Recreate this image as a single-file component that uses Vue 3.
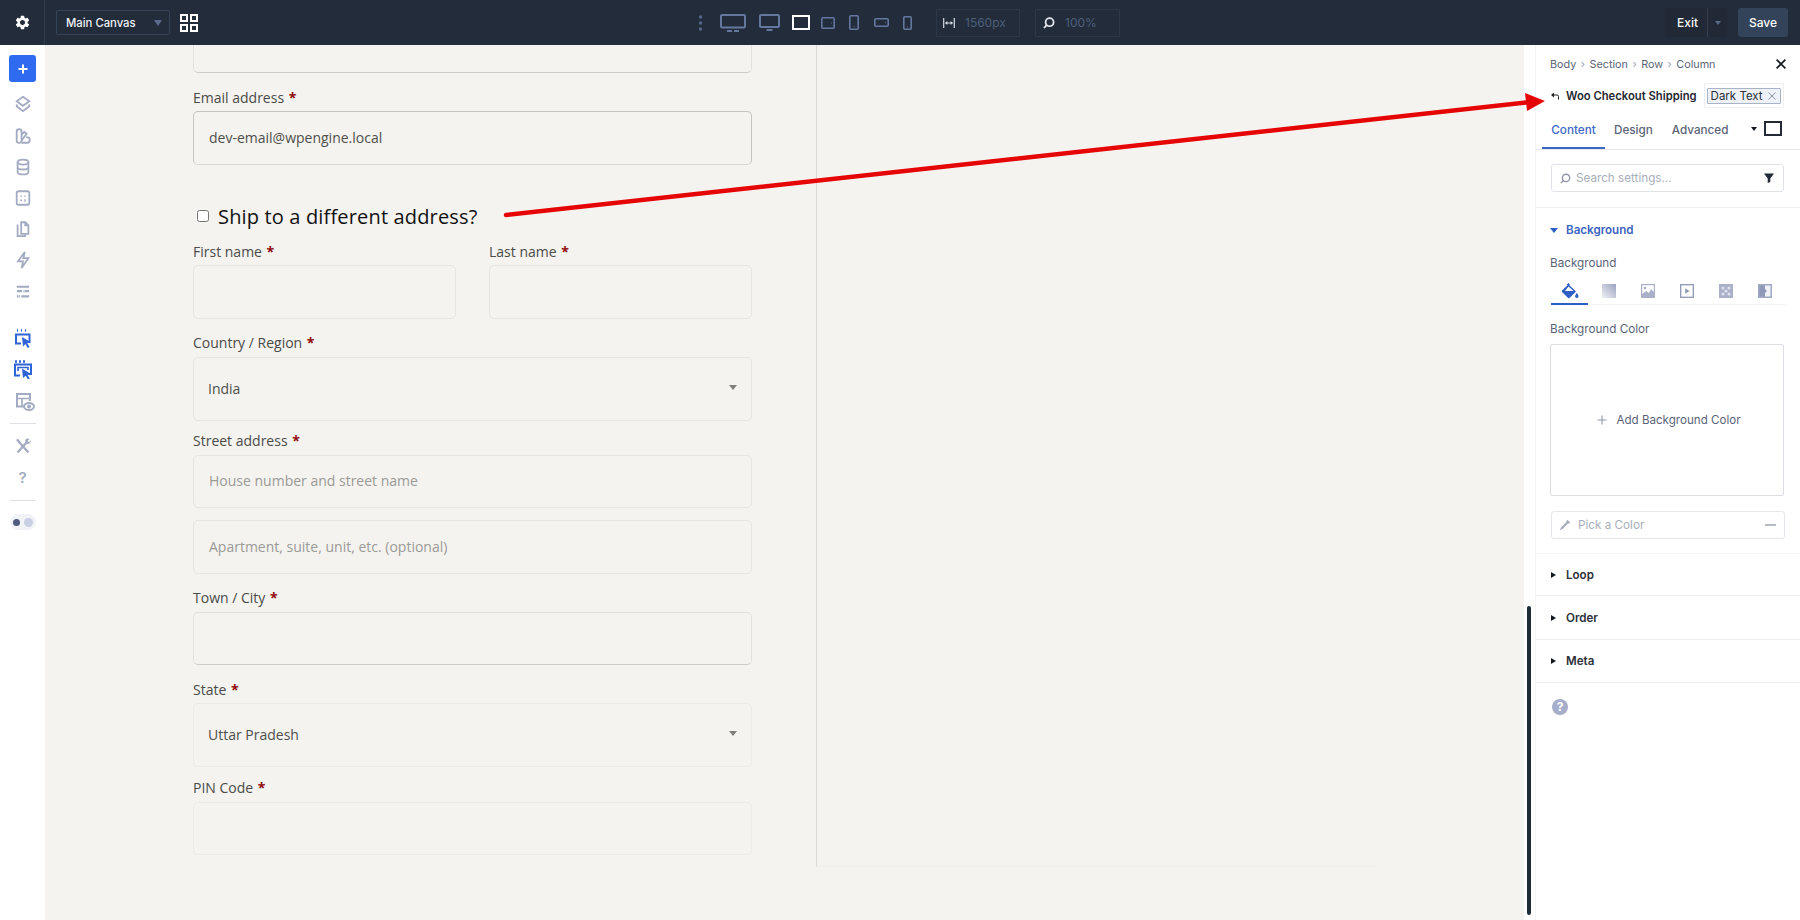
<template>
  <div class="app">
    <header class="topbar">
      <div class="gearcell">
        <svg class="gear" viewBox="0 0 24 24"><path fill="#fff" d="M19.14 12.94c.04-.3.06-.61.06-.94 0-.32-.02-.64-.07-.94l2.03-1.58a.49.49 0 0 0 .12-.61l-1.92-3.32a.488.488 0 0 0-.59-.22l-2.39.96c-.5-.38-1.03-.7-1.62-.94l-.36-2.54a.484.484 0 0 0-.48-.41h-3.84c-.24 0-.43.17-.47.41l-.36 2.54c-.59.24-1.13.57-1.62.94l-2.39-.96c-.22-.08-.47 0-.59.22L2.74 8.87c-.12.21-.08.47.12.61l2.03 1.58c-.05.3-.09.63-.09.94s.02.64.07.94l-2.03 1.58a.49.49 0 0 0-.12.61l1.92 3.32c.12.22.37.29.59.22l2.39-.96c.5.38 1.03.7 1.62.94l.36 2.54c.05.24.24.41.48.41h3.84c.24 0 .44-.17.47-.41l.36-2.54c.59-.24 1.13-.56 1.62-.94l2.39.96c.22.08.47 0 .59-.22l1.92-3.32c.12-.22.07-.47-.12-.61l-2.01-1.58zM12 15.6c-1.98 0-3.6-1.62-3.6-3.6s1.62-3.6 3.6-3.6 3.6 1.62 3.6 3.6-1.62 3.6-3.6 3.6z"/></svg>
      </div>
      <div class="canvas-select">
        <span>Main Canvas</span>
        <i class="tri tri-top"></i>
      </div>
      <svg class="gridicon" viewBox="0 0 18 18" fill="none" stroke="#fff" stroke-width="2"><rect x="1" y="1" width="6" height="6"/><rect x="11" y="1" width="6" height="6"/><rect x="1" y="11" width="6" height="6"/><rect x="11" y="11" width="6" height="6"/></svg>

      <div class="devices">
        <svg class="d-dots" viewBox="0 0 5 16" fill="#56688a"><circle cx="2.5" cy="2" r="1.7"/><circle cx="2.5" cy="8" r="1.7"/><circle cx="2.5" cy="14" r="1.7"/></svg>
        <svg class="d-mon1" viewBox="0 0 26 18" fill="none" stroke="#64779f" stroke-width="2"><rect x="1" y="1" width="24" height="12.5" rx="1"/><path d="M7 17h5M14 17h5"/></svg>
        <svg class="d-mon2" viewBox="0 0 21 17" fill="none" stroke="#64779f" stroke-width="2"><rect x="1" y="1" width="19" height="12" rx="1"/><path d="M7.5 16h6"/></svg>
        <svg class="d-base" viewBox="0 0 18 15" fill="none" stroke="#fff" stroke-width="2"><rect x="1" y="1" width="16" height="13"/></svg>
        <svg class="d-tl" viewBox="0 0 14 12" fill="none" stroke="#64779f" stroke-width="1.6"><rect x=".8" y=".8" width="12.4" height="10.4" rx="1"/><path d="M10.5 6h.5"/></svg>
        <svg class="d-tp" viewBox="0 0 10 15" fill="none" stroke="#64779f" stroke-width="1.6"><rect x=".8" y=".8" width="8.4" height="13.4" rx="1"/><path d="M4.7 11.5h.6"/></svg>
        <svg class="d-ml" viewBox="0 0 15 9" fill="none" stroke="#64779f" stroke-width="1.6"><rect x=".8" y=".8" width="13.4" height="7.4" rx="1"/><path d="M11 4.5h.6"/></svg>
        <svg class="d-mp" viewBox="0 0 9 14" fill="none" stroke="#64779f" stroke-width="1.6"><rect x=".8" y=".8" width="7.4" height="12.4" rx="1"/><path d="M4.2 11h.6"/></svg>
      </div>

      <div class="metric metric-w">
        <svg class="m-ic1" viewBox="0 0 12 12" fill="none" stroke="#d5dae4" stroke-width="1.2"><path d="M.7 1v10M11.3 1v10M2.5 6h7"/><path fill="#d5dae4" stroke="none" d="M2 6l2.4-2v4zM10 6L7.6 4v4z"/></svg>
        <span>1560px</span>
      </div>
      <div class="metric metric-z">
        <svg class="m-ic2" viewBox="0 0 12 12" fill="none" stroke="#e4e7ee" stroke-width="1.8"><circle cx="6.6" cy="5.2" r="4"/><path d="M3.6 8.2L1 11"/></svg>
        <span>100%</span>
      </div>

      <div class="actions">
        <div class="exit">
          <span class="exit-label">Exit</span>
          <span class="exit-caret"><i class="tri tri-exit"></i></span>
        </div>
        <button class="save">Save</button>
      </div>
    </header>

    <div class="main">
      <nav class="sidebar">
        <div class="plus">
          <svg viewBox="0 0 10 10" fill="none" stroke="#fff" stroke-width="2"><path d="M5 .5v9M.5 5h9"/></svg>
        </div>
        <svg class="si mt-13" viewBox="0 0 18 20"><path d="M9 2l7 5-7 5-7-5z"/><path d="M2.2 10.5L2 12.5l7 5.5 7-5.5-.2-2"/></svg>
        <svg class="si mt-14" viewBox="0 0 18 20"><path d="M2 5a2.7 2.7 0 0 1 5.4 0v10a2.7 2.7 0 0 1-5.4 0z"/><path d="M7.5 8L10.5 5.5 13 7.5 7.5 15"/><path d="M7.5 17.5H14a2.4 2.4 0 0 0 2.4-2.4v-1.2A2.4 2.4 0 0 0 14 11.5h-1.5"/></svg>
        <svg class="si mt-13" viewBox="0 0 18 20"><ellipse cx="9" cy="4.5" rx="6" ry="2.8"/><path d="M3 4.5v11c0 1.6 2.7 2.8 6 2.8s6-1.2 6-2.8v-11M3 10c0 1.6 2.7 2.8 6 2.8s6-1.2 6-2.8"/></svg>
        <svg class="si mt-13" viewBox="0 0 18 20"><rect x="2" y="2.5" width="14" height="15" rx="2"/><path d="M6 8h2M10.5 8h1.5M6 12.5h2M10.5 12h1.5M10.5 13.5h1.5" stroke-width="1.4"/></svg>
        <svg class="si mt-13" viewBox="0 0 18 20"><path d="M7 2.5h4.5L15 6v9.5H7z"/><path d="M4 6H3v12h8.5v-2"/><path d="M11.5 2.5V6H15"/></svg>
        <svg class="si mt-13" viewBox="0 0 18 20"><path d="M11 1L3.5 11.5H9L7.5 19 15 8H9.5z"/></svg>
        <svg class="si si-lines mt-16" viewBox="0 0 18 16"><path d="M2 2h14M2 7h6M11 7h5M2 13h2M7 13h9" stroke-width="2.4"/><path d="M10 5.5v3M5 11.5v3" stroke-width="1"/></svg>

        <svg class="si si-blue mt-29" viewBox="0 0 20 20"><path d="M4 2.5h1M8 2.5h1M12 2.5h1" stroke-width="2.6"/><path d="M14.5 14H16.500V6.500H3v9h5"/><path fill="#2f63d6" stroke="none" d="M9 9l8.500 5-3.300 1 2.300 4-1.800 1-2.200-4-2.500 2.500z"/></svg>
        <svg class="si si-blue mt-11" viewBox="0 0 20 20"><path d="M2 2.500h2M6 2.500h2M10 2.500h2" stroke-width="2.6"/><path d="M15 15h3V5.500H2v11h5"/><path d="M5 12V8.500h10V11" stroke-width="1.600"/><path fill="#2f63d6" stroke="none" d="M9 9.500l9 5.500-3.500 1 2.300 3.600-1.800 1-2.200-3.800-2.800 2.200z"/></svg>
        <svg class="si mt-13 si-eye" viewBox="0 0 20 20"><path d="M10 14.500H2V2h13v7"/><path d="M2 6.500h13M7 6.500v8" stroke-width="1.700"/><ellipse cx="14" cy="14.500" rx="5" ry="3.500"/><circle cx="14" cy="14.500" r="1" fill="#a3abc2"/></svg>
        <div class="hr hr-1"></div>
        <svg class="si mt-13 si-tools" viewBox="0 0 18 18"><path d="M3.500 15.500L13 5" stroke-width="2.200"/><path d="M14.500 15.500L5 5" stroke-width="2.200"/><path d="M2 3l1.800-1.300 2.700 2.700-1.800 1.800z" fill="#a3abc2" stroke="none"/><path d="M11 4a3 3 0 0 1 4.500-2l-2 2 1.500 1.300 1.800-1.800a3 3 0 0 1-3.400 3.500z" fill="#a3abc2" stroke="none"/></svg>
        <span class="q">?</span>
        <div class="hr hr-2"></div>
        <div class="toggle">
          <i class="dot dark"></i><i class="dot pale"></i>
        </div>
      </nav>

      <main class="canvas">
        <div class="canvas-row">
          <form class="form" @submit.prevent>
            <div class="inp h28 notop line-md"></div>

            <label class="lab mt15">Email address <b>*</b></label>
            <div class="inp h54 mt3 line-strong"><span class="val">dev-email@wpengine.local</span></div>

            <div class="ship mt39">
              <input class="chk" type="checkbox" />
              <span>Ship to a different address?</span>
            </div>

            <div class="pair mt14">
              <div class="half">
                <label class="lab">First name <b>*</b></label>
                <div class="inp h54 mt3 line-soft"></div>
              </div>
              <div class="half half-b">
                <label class="lab">Last name <b>*</b></label>
                <div class="inp h54 mt3 line-soft"></div>
              </div>
            </div>

            <label class="lab mt14">Country / Region <b>*</b></label>
            <div class="inp h64 mt4 line-soft sel"><span class="val">India</span><i class="tri tri-sel"></i></div>

            <label class="lab mt10">Street address <b>*</b></label>
            <div class="inp h53 mt4 line-soft"><span class="ph">House number and street name</span></div>
            <div class="inp h54 mt12 line-soft"><span class="ph">Apartment, suite, unit, etc. (optional)</span></div>

            <label class="lab mt14">Town / City <b>*</b></label>
            <div class="inp h53 mt4 line-md"></div>

            <label class="lab mt15">State <b>*</b></label>
            <div class="inp h64 mt3 line-faint sel"><span class="val">Uttar Pradesh</span><i class="tri tri-sel"></i></div>

            <label class="lab mt11">PIN Code <b>*</b></label>
            <div class="inp h53 mt4 line-faint"></div>
          </form>
          <div class="sidecol"></div>
        </div>
      </main>

      <aside class="right">
        <div class="gutter"><div class="scrollbar"></div></div>
        <div class="panel">
          <div class="crumbs">
            <span>Body</span><em>›</em><span>Section</span><em>›</em><span>Row</span><em>›</em><span>Column</span>
            <svg class="close" viewBox="0 0 10 10" fill="none" stroke="#14181f" stroke-width="1.600"><path d="M.6.6l8.800 8.800M9.400.6L.6 9.400"/></svg>
          </div>

          <div class="titlerow">
            <svg class="back" viewBox="0 0 8 8" fill="none" stroke="#222" stroke-width="1"><path d="M2.500 3H6a1.500 1.500 0 0 1 1.500 1.500V7.500"/><path fill="#222" stroke="none" d="M0 3l3-2.500v5z"/></svg>
            <span class="title">Woo Checkout Shipping</span>
            <div class="classbox">
              <div class="chip"><span>Dark Text</span>
                <svg viewBox="0 0 8 8" fill="none" stroke="#8b93a5" stroke-width="1"><path d="M.5.5l7 7M7.500.5l-7 7"/></svg>
              </div>
            </div>
          </div>

          <div class="tabs">
            <div class="tab active">Content</div>
            <div class="tab">Design</div>
            <div class="tab">Advanced</div>
            <i class="tri tri-tab"></i>
            <span class="tabsquare"></span>
          </div>

          <div class="searchwrap">
            <div class="search">
              <svg class="s-ic" viewBox="0 0 12 12" fill="none" stroke="#8d95a6" stroke-width="1.500"><circle cx="6.600" cy="5.400" r="4"/><path d="M3.600 8.400L1 11"/></svg>
              <span>Search settings...</span>
              <svg class="s-filter" viewBox="0 0 10 10" fill="#232a36"><path d="M0 .5h10L6.300 5.500v3.500L3.700 10V5.500z"/></svg>
            </div>
          </div>

          <section class="bgsec">
            <div class="sec-head open"><i class="tri tri-blue"></i><span>Background</span></div>
            <div class="sublabel mt-bg">Background</div>
            <div class="bgtabs">
              <div class="bgtab on">
                <svg class="b1" viewBox="0 0 18 16" fill="#2f5ec4"><path d="M7.500 0L9 1.500 8.400 2.200 15 8.500 8.500 15a1 1 0 0 1-1.400 0L1 8.900a1 1 0 0 1 0-1.400L6.500 2.200 5.800 1.500zM4 8h8.500L7.500 3.500z"/><path d="M15.800 10s-1.700 2-1.700 3.300a1.700 1.700 0 0 0 3.400 0c0-1.300-1.700-3.300-1.700-3.300z"/></svg>
              </div>
              <div class="bgtab"><span class="gradbox"></span></div>
              <div class="bgtab">
                <svg class="b2" viewBox="0 0 14 14"><rect x=".6" y=".6" width="12.800" height="12.800" fill="#fff" stroke="#a9b0c8" stroke-width="1.200"/><circle cx="4" cy="4" r="1.300" fill="#a9b0c8"/><path d="M1 13V10l4-3 3 2 2-4 3 3v5z" fill="#a9b0c8"/></svg>
              </div>
              <div class="bgtab">
                <svg class="b2" viewBox="0 0 14 14"><rect x=".7" y=".7" width="12.600" height="12.600" fill="none" stroke="#8f97b4" stroke-width="1.300"/><path d="M5.200 4.300L9.500 7l-4.300 2.700z" fill="#8f97b4"/></svg>
              </div>
              <div class="bgtab">
                <svg class="b2" viewBox="0 0 14 14"><rect width="14" height="14" fill="#a9b0c8"/><circle cx="4" cy="4" r="1.600" fill="#dfe2ec"/><circle cx="10" cy="4" r="1.600" fill="#dfe2ec"/><circle cx="7" cy="7" r="1.600" fill="#dfe2ec"/><circle cx="4" cy="10" r="1.600" fill="#dfe2ec"/><circle cx="10" cy="10" r="1.600" fill="#dfe2ec"/></svg>
              </div>
              <div class="bgtab">
                <svg class="b2" viewBox="0 0 14 14"><rect width="14" height="14" fill="#a0a8c4"/><path d="M7 1.500h5.500v11H7z" fill="#f1f2f7"/><path d="M1.500 1.500H7V5L9 7 7 9v3.500H1.500z" fill="#9098b8"/></svg>
              </div>
            </div>

            <div class="sublabel mt-bc">Background Color</div>
            <div class="addbox">
              <svg viewBox="0 0 10 10" fill="none" stroke="#8f97a8" stroke-width="1.100"><path d="M5 .5v9M.5 5h9"/></svg>
              <span>Add Background Color</span>
            </div>
            <div class="pick">
              <svg class="p-ic" viewBox="0 0 12 12" fill="#a7adba"><path d="M8.500.8l2.700 2.700-1.300 1.300-.5-.5L3.500 10l-2.800 1.300L2 8.500l5.700-5.700-.5-.5z"/></svg>
              <span>Pick a Color</span>
              <i class="dash"></i>
            </div>
          </section>

          <div class="acc acc-first"><i class="tri tri-acc"></i><span>Loop</span></div>
          <div class="acc acc-tall"><i class="tri tri-acc"></i><span>Order</span></div>
          <div class="acc"><i class="tri tri-acc"></i><span>Meta</span></div>

          <div class="help">?</div>
        </div>
      </aside>
    </div>

    <svg class="arrow" viewBox="0 0 1800 920">
      <path d="M506 215L1530 102" stroke="#e60505" stroke-width="4.500" stroke-linecap="round" fill="none"/>
      <path d="M1545 101L1525 93 1527 111z" fill="#e60505"/>
    </svg>
  </div>
</template>

<script setup>
</script>

<style>
html, body { margin: 0; padding: 0; }
</style>

<style scoped>
.app {
  position: relative;
  width: 1800px;
  height: 920px;
  overflow: hidden;
  display: flex;
  flex-direction: column;
  font-family: Inter, "Liberation Sans", sans-serif;
  background: #fff;
}
.tri { display: block; width: 0; height: 0; border-style: solid; border-color: transparent; }

/* top bar */
.topbar {
  height: 45px;
  flex: none;
  background: #222c3a;
  display: flex;
  align-items: center;
  position: relative;
}
.gearcell {
  width: 45px;
  height: 45px;
  flex: none;
  border-right: 1px solid #323e4e;
  box-sizing: border-box;
  display: flex;
  align-items: center;
  justify-content: center;
}
.gear { width: 17px; height: 17px; }
.canvas-select {
  margin-left: 11px;
  width: 114px;
  height: 25px;
  box-sizing: border-box;
  border: 1px solid #364459;
  border-radius: 2px;
  display: flex;
  align-items: center;
  padding-left: 9px;
  color: #eef0f4;
  font-size: 11.3px;
  font-weight: 500;
}
.tri-top { margin-left: 18px; border-width: 6px 4px 0; border-top-color: #5a6b8c; }
.gridicon { width: 18px; height: 18px; margin-left: 10px; flex: none; }

.devices {
  margin-left: 500px;
  display: flex;
  align-items: center;
  flex: none;
}
.devices svg { display: block; flex: none; }
.d-dots { width: 5px; height: 16px; }
.d-mon1 { width: 26px; height: 18px; margin-left: 17px; }
.d-mon2 { width: 21px; height: 17px; margin-left: 13px; }
.d-base { width: 18px; height: 15px; margin-left: 12px; }
.d-tl { width: 14px; height: 12px; margin-left: 11px; }
.d-tp { width: 10px; height: 15px; margin-left: 14px; }
.d-ml { width: 15px; height: 9px; margin-left: 15px; }
.d-mp { width: 9px; height: 14px; margin-left: 14px; }

.metric {
  height: 28px;
  box-sizing: border-box;
  border: 1px solid #2c3848;
  display: flex;
  align-items: center;
  color: #4e5f7c;
  font-size: 12px;
  flex: none;
}
.metric-w { width: 84px; margin-left: 24px; padding-left: 6px; }
.metric-z { width: 85px; margin-left: 15px; padding-left: 7px; }
.m-ic1 { width: 12px; height: 12px; margin-right: 10px; }
.m-ic2 { width: 12px; height: 12px; margin-right: 10px; }

.actions { margin-left: auto; margin-right: 12px; display: flex; align-items: center; }
.exit {
  width: 62px;
  height: 29px;
  box-sizing: border-box;
  background: #202935;
  border-radius: 2px;
  display: flex;
  align-items: center;
  color: #f2f4f7;
  font-size: 12px;
  font-weight: 500;
}
.exit-label { width: 43px; padding-left: 3px; text-align: center; border-right: 1px solid #333f4f; line-height: 29px; box-sizing: border-box; }
.exit-caret { flex: 1; display: flex; justify-content: center; }
.tri-exit { border-width: 4px 3px 0; border-top-color: #5a6b8c; }
.save {
  margin-left: 11px;
  width: 50px;
  height: 29px;
  border: 0;
  border-radius: 3px;
  background: #33445a;
  color: #fff;
  font: 500 12px Inter, sans-serif;
  padding: 0;
}

.main { flex: 1; display: flex; min-height: 0; }

/* sidebar */
.sidebar {
  width: 45px;
  flex: none;
  background: #fff;
  display: flex;
  flex-direction: column;
  align-items: center;
  padding-top: 10px;
  box-sizing: border-box;
}
.plus {
  width: 27px;
  height: 27px;
  border-radius: 3px;
  background: #2e6bf0;
  display: flex;
  align-items: center;
  justify-content: center;
  flex: none;
}
.plus svg { width: 10px; height: 10px; }
.si {
  width: 18px;
  height: 18px;
  flex: none;
  fill: none;
  stroke: #a3abc2;
  stroke-width: 2;
  display: block;
}
.si-lines { height: 14px; }
.si-blue { stroke: #2f63d6; width: 20px; height: 20px; }
.si-eye { width: 20px; height: 20px; margin-left: 4px; }
.mt-11 { margin-top: 11px; }
.mt-13 { margin-top: 13px; }
.mt-14 { margin-top: 14px; }
.mt-16 { margin-top: 16px; }
.mt-29 { margin-top: 29px; }
.hr { width: 26px; height: 1px; background: #dcdfe6; flex: none; }
.hr-1 { margin-top: 11px; }
.hr-2 { margin-top: 13px; }
.q { margin-top: 14px; color: #a3abc0; font-size: 15px; font-weight: 600; line-height: 18px; }
.toggle {
  margin-top: 13px;
  width: 26px;
  height: 16px;
  border-radius: 8px;
  background: #f2f3f7;
  display: flex;
  align-items: center;
  justify-content: space-between;
  padding: 0 3px;
  box-sizing: border-box;
}
.dot { width: 7px; height: 7px; border-radius: 50%; }
.dark { background: #4f5c80; }
.pale { background: #c8cfe2; width: 9px; height: 9px; }

/* canvas */
.canvas { flex: 1; background: #f4f3ef; min-width: 0; overflow: hidden; }
.canvas-row { display: flex; height: 822px; }
.form {
  width: 559px;
  margin-left: 148px;
  flex: none;
  display: flex;
  flex-direction: column;
  font-family: "Open Sans", sans-serif;
}
.sidecol {
  margin-left: 64px;
  width: 560px;
  flex: none;
  border-left: 1px solid #d9d8d3;
  border-bottom: 1px solid #efeeea;
  box-sizing: border-box;
}
.lab {
  display: block;
  height: 20px;
  line-height: 20px;
  font-size: 14px;
  font-weight: 500;
  color: #4b4b49;
  flex: none;
}
.lab b { color: #8f0a0a; font-weight: 700; margin-left: 1px; }
.inp {
  box-sizing: border-box;
  border: 1px solid #e4e3df;
  border-radius: 5px;
  display: flex;
  align-items: center;
  padding-left: 15px;
  padding-bottom: 2px;
  flex: none;
  font-size: 14px;
}
.notop { border-top: 0; border-radius: 0 0 5px 5px; }
.line-strong { border-color: #c5c4bf; border-bottom-color: #dad9d4; }
.line-md { border-color: #e2e1dd; border-bottom-color: #ccccc7; }
.line-soft { border-color: #e6e5e1; }
.line-faint { border-color: #ecebe7; }
.sel { padding-left: 14px; padding-right: 14px; justify-content: space-between; }
.val { color: #4f4f4d; }
.ph { color: #9a9a97; }
.tri-sel { border-width: 5px 4px 0; border-top-color: #7f7f7c; margin-top: -2px; }
.h28 { height: 28px; }
.h53 { height: 53px; }
.h54 { height: 54px; }
.h64 { height: 64px; }
.mt3 { margin-top: 3px; }
.mt4 { margin-top: 4px; }
.mt10 { margin-top: 10px; }
.mt11 { margin-top: 11px; }
.mt12 { margin-top: 12px; }
.mt14 { margin-top: 14px; }
.mt15 { margin-top: 15px; }
.mt39 { margin-top: 39px; }
.ship {
  display: flex;
  align-items: center;
  height: 24px;
  font-size: 20px;
  font-weight: 500;
  color: #111;
  letter-spacing: .16px;
  flex: none;
}
.chk { width: 12px; height: 12px; margin: 0 9px 0 4px; flex: none; }
.pair { display: flex; flex: none; }
.half { width: 263px; flex: none; }
.half-b { margin-left: 33px; }

/* right panel */
.right { width: 276px; flex: none; display: flex; background: #fff; }
.gutter { width: 11px; flex: none; }
.scrollbar {
  width: 4px;
  height: 309px;
  margin: 561px 0 0 3px;
  border-radius: 2px;
  background: #1f2d38;
}
.panel {
  flex: 1;
  min-width: 0;
  border-left: 1px solid #f4f4f6;
  box-sizing: border-box;
  display: flex;
  flex-direction: column;
}
.crumbs {
  display: flex;
  align-items: center;
  height: 20px;
  margin-top: 9px;
  padding-left: 14px;
  font-size: 10.8px;
  color: #5b6478;
}
.crumbs em { font-style: normal; color: #9aa1b2; margin: 0 4.5px; font-size: 11px; }
.close { width: 10px; height: 10px; margin-left: auto; margin-right: 14px; }
.titlerow {
  display: flex;
  align-items: center;
  height: 25px;
  margin-top: 9px;
  padding-left: 15px;
  flex: none;
}
.back { width: 8px; height: 8px; flex: none; }
.title { margin-left: 7px; font-size: 11.25px; font-weight: 600; color: #232831; white-space: nowrap; }
.classbox {
  margin-left: 7px;
  width: 80px;
  height: 25px;
  box-sizing: border-box;
  border: 1px solid #eceef2;
  border-radius: 2px;
  display: flex;
  align-items: center;
  padding-left: 2px;
  flex: none;
}
.chip {
  width: 74px;
  height: 16px;
  box-sizing: border-box;
  background: #eef1f7;
  border: 1px solid #a9b3c8;
  border-radius: 1px;
  display: flex;
  align-items: center;
  padding-left: 3px;
  font-size: 11.5px;
  color: #2b2f38;
  white-space: nowrap;
}
.chip svg { width: 8px; height: 8px; margin-left: 5px; flex: none; }
.tabs {
  display: flex;
  align-items: center;
  height: 41px;
  padding: 0 18px 0 6px;
  border-bottom: 1px solid #e6e8ee;
  flex: none;
  box-sizing: content-box;
}
.tab {
  padding: 0 10px 0 9px;
  height: 41px;
  line-height: 44px;
  font-size: 11.7px;
  font-weight: 500;
  color: #5b6478;
  box-sizing: border-box;
  flex: none;
}
.tab.active { width: 63px; padding: 0; text-align: center; color: #3b68c6; border-bottom: 2px solid #3b68c6; }
.tri-tab { border-width: 4px 3px 0; border-top-color: #14181f; margin-left: auto; }
.tabsquare {
  width: 18px;
  height: 15px;
  box-sizing: border-box;
  border: 2px solid #232a36;
  margin-left: 7px;
}
.searchwrap {
  padding: 14px 16px 15px 15px;
  border-bottom: 1px solid #eef0f3;
  flex: none;
}
.search {
  height: 28px;
  box-sizing: border-box;
  border: 1px solid #dfe2e8;
  border-radius: 3px;
  display: flex;
  align-items: center;
  padding: 0 9px 0 8px;
  font-size: 11.7px;
  color: #a9afbb;
}
.s-ic { width: 11px; height: 11px; margin-right: 5px; flex: none; }
.s-filter { width: 10px; height: 10px; margin-left: auto; flex: none; }
.bgsec { padding: 12px 14px 0 14px; flex: none; }
.sec-head {
  display: flex;
  align-items: center;
  height: 20px;
  font-size: 11.6px;
  font-weight: 600;
  color: #3b62c0;
}
.tri-blue { border-width: 5px 4px 0; border-top-color: #2f5ec4; margin: 0 8px 0 0; }
.sublabel { font-size: 11.7px; color: #5a6478; height: 20px; line-height: 20px; }
.mt-bg { margin-top: 13px; }
.mt-bc { margin-top: 14px; }
.bgtabs {
  display: flex;
  height: 32px;
  margin-left: 1px;
  border-bottom: 1px solid #f3f4f7;
  box-sizing: border-box;
}
.bgtab {
  width: 39px;
  height: 32px;
  box-sizing: border-box;
  padding-top: 11px;
  display: flex;
  justify-content: center;
  flex: none;
}
.bgtab.on { width: 37px; border-bottom: 2px solid #2f5ec4; margin-right: 1px; padding-top: 10px; }
.b1 { width: 18px; height: 16px; }
.b2 { width: 14px; height: 14px; display: block; }
.gradbox { width: 14px; height: 14px; background: linear-gradient(45deg, #f0f1f6, #9aa2bf); display: block; }
.addbox {
  margin-top: 5px;
  height: 152px;
  width: 234px;
  box-sizing: border-box;
  border: 1px solid #dcdee4;
  border-radius: 2px;
  padding-left: 4px;
  display: flex;
  align-items: center;
  justify-content: center;
  font-size: 11.6px;
  color: #5a6478;
}
.addbox svg { width: 10px; height: 10px; margin-right: 9px; }
.pick {
  margin-top: 15px;
  margin-left: 1px;
  width: 234px;
  height: 28px;
  box-sizing: border-box;
  border: 1px solid #e4e6eb;
  border-radius: 3px;
  display: flex;
  align-items: center;
  padding: 0 8px 0 7px;
  font-size: 11.7px;
  color: #a9afbb;
}
.p-ic { width: 12px; height: 12px; margin-right: 7px; flex: none; }
.dash { width: 11px; height: 1.500px; background: #b5bac5; margin-left: auto; }
.acc {
  height: 43px;
  box-sizing: border-box;
  border-bottom: 1px solid #eceef1;
  display: flex;
  align-items: center;
  padding-left: 15px;
  font-size: 11.6px;
  font-weight: 600;
  color: #2c3039;
  flex: none;
}
.acc-first { margin-top: 14px; border-top: 1px solid #f6f6f8; }
.acc-tall { height: 44px; }
.tri-acc { border-width: 3.500px 0 3.500px 5px; border-left-color: #14181f; margin-right: 10px; }
.help {
  margin: 16px 0 0 16px;
  width: 16px;
  height: 16px;
  border-radius: 50%;
  background: #a6aecb;
  color: #fff;
  font-size: 12px;
  font-weight: 700;
  line-height: 16px;
  text-align: center;
}

.arrow {
  position: absolute;
  left: 0;
  top: 0;
  width: 1800px;
  height: 920px;
  pointer-events: none;
}
</style>
